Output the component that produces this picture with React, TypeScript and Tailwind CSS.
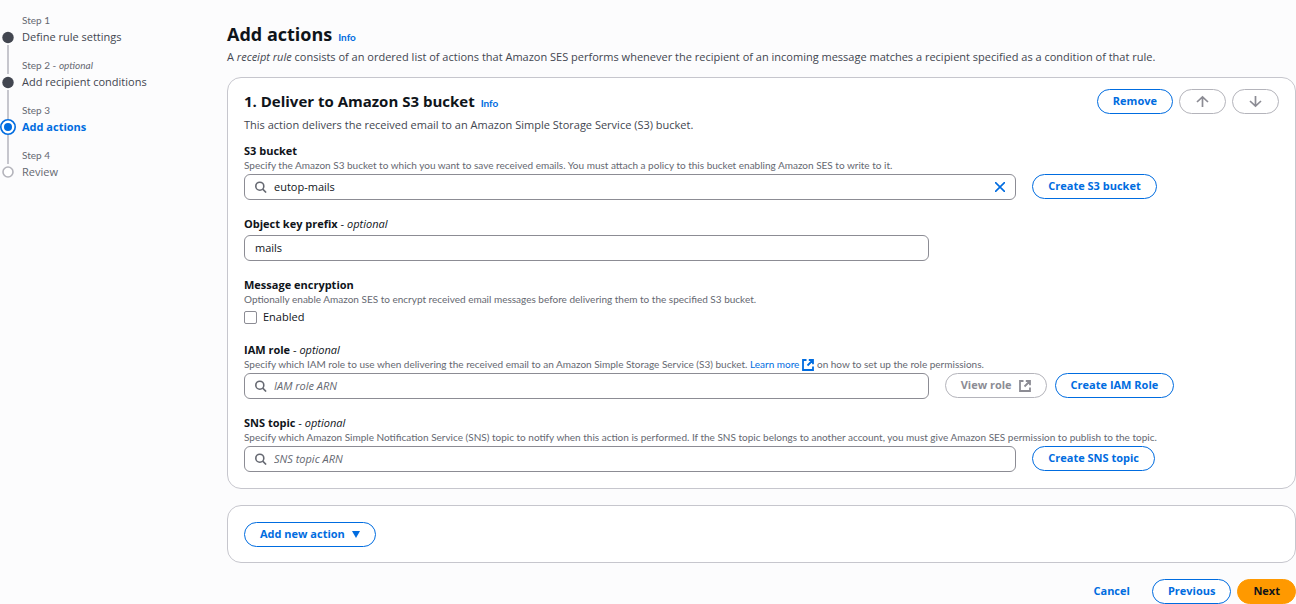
import { useState } from 'react';
import type { ReactNode } from 'react';

type StepState = 'done' | 'current' | 'todo';

const steps: { name: string; optional?: boolean; state: StepState }[] = [
  { name: 'Define rule settings', state: 'done' },
  { name: 'Add recipient conditions', optional: true, state: 'done' },
  { name: 'Add actions', state: 'current' },
  { name: 'Review', state: 'todo' },
];

const stepText: Record<StepState, string> = {
  done: 'text-[#424650]',
  current: 'font-bold text-[#006ce0]',
  todo: 'text-[#656871]',
};

const small = "font-['Lato','Open_Sans',sans-serif] text-[10px]";

function StepMarker({ state }: { state: StepState }) {
  return (
    <svg viewBox="0 0 16 16" className="size-4" aria-hidden="true">
      {state === 'done' && <circle cx="8" cy="8.5" r="5.7" fill="#424650" />}
      {state === 'current' && (
        <>
          <circle cx="8" cy="8" r="7.2" fill="#fff" stroke="#006ce0" strokeWidth="1.6" />
          <circle cx="8" cy="8" r="4" fill="#006ce0" />
        </>
      )}
      {state === 'todo' && <circle cx="8" cy="8" r="5" fill="#fff" stroke="#b4b4bb" strokeWidth="1.6" />}
    </svg>
  );
}

function Line({ hidden }: { hidden: boolean }) {
  return <span className={hidden ? 'w-0' : 'w-[2px] justify-self-center bg-[#c6c6cd]'} />;
}

function Steps() {
  return (
    <nav aria-label="Steps" className="w-[227px] shrink-0 pt-[13px]">
      <ol>
        {steps.map((step, i) => (
          <li key={step.name} className="grid grid-cols-[16px_1fr] grid-rows-[16px_16px_13px] gap-x-[6px]">
            <Line hidden={i === 0} />
            <span className={`${small} leading-[14px] text-[#656871]`}>
              Step {i + 1}
              {step.optional && (
                <>
                  {' '}- <i>optional</i>
                </>
              )}
            </span>
            <StepMarker state={step.state} />
            <a href="#step" className={`leading-4 ${stepText[step.state]}`}>
              {step.name}
            </a>
            <Line hidden={i === steps.length - 1} />
          </li>
        ))}
      </ol>
    </nav>
  );
}

const buttonStyles = {
  normal: 'border-[#006ce0] bg-white text-[#006ce0]',
  disabled: 'border-[#b4b4bb] bg-white text-[#8c8c94]',
  link: 'border-transparent text-[#006ce0]',
  primary: 'border-[#ff9900] bg-[#ff9900] text-[#0f141a]',
};

function Button({
  kind = 'normal',
  label,
  children,
}: {
  kind?: keyof typeof buttonStyles;
  label?: string;
  children: ReactNode;
}) {
  return (
    <button
      type="button"
      aria-label={label}
      disabled={kind === 'disabled'}
      className={`flex h-[25px] items-center gap-[7px] rounded-full border px-[15px] font-bold whitespace-nowrap ${buttonStyles[kind]}`}
    >
      {children}
    </button>
  );
}

function Arrow({ down = false }: { down?: boolean }) {
  return (
    <svg viewBox="0 0 15 13" className="h-[13px] w-[15px]" fill="none" stroke="currentColor" strokeWidth="1.7" aria-hidden="true">
      <path d={down ? 'M7.5 1v10M2 6l5.5 5.2L13 6' : 'M7.5 12V2M2 7l5.5-5.2L13 7'} />
    </svg>
  );
}

function External() {
  return (
    <svg viewBox="0 0 12 12" className="size-3" fill="none" stroke="currentColor" strokeWidth="1.8" aria-hidden="true">
      <path d="M4.5 1H1v10h10V7.5M6.8 1H11v4.2M11 1 5.5 6.5" />
    </svg>
  );
}

function Search() {
  return (
    <svg viewBox="0 0 12 12" className="size-3 shrink-0 text-[#656871]" fill="none" stroke="currentColor" strokeWidth="1.6" aria-hidden="true">
      <circle cx="4.8" cy="5.2" r="4" />
      <path d="m7.7 8.1 3.4 3.4" />
    </svg>
  );
}

function Info() {
  return (
    <a href="#info" className={`${small} font-bold text-[#006ce0]`}>
      Info
    </a>
  );
}

function Field({
  id,
  label,
  optional = false,
  description,
  children,
}: {
  id: string;
  label: string;
  optional?: boolean;
  description?: ReactNode;
  children: ReactNode;
}) {
  return (
    <div>
      <label htmlFor={id} className="block leading-4 text-[#0f141a]">
        <span className="font-bold">{label}</span>
        {optional && (
          <>
            {' '}- <i>optional</i>
          </>
        )}
      </label>
      {description && <p className={`${small} leading-[13px] text-[#656871]`}>{description}</p>}
      <div className={`grid grid-cols-12 gap-x-4 ${description ? 'mt-[2px]' : 'mt-[3px]'}`}>{children}</div>
    </div>
  );
}

const box = 'flex h-[26px] items-center rounded-[6px] border border-[#8c8c94] bg-white px-[10px]';
const input = 'min-w-0 flex-1 bg-transparent text-[#0f141a] outline-none placeholder:text-[#656871] placeholder:italic';

export default function App() {
  const [bucket, setBucket] = useState('eutop-mails');
  return (
    <div className="flex min-h-screen bg-[#fcfcfd] font-['Open_Sans','Noto_Sans',sans-serif] text-[11px] text-[#424650]">
      <Steps />
      <main className="min-w-0 flex-1 pt-[22px]">
        <h1 className="flex items-baseline gap-[6px] text-[18px] leading-6 font-bold text-[#0f141a]">
          Add actions <Info />
        </h1>
        <p className="leading-4">
          A <i>receipt rule</i> consists of an ordered list of actions that Amazon SES performs whenever the recipient of an
          incoming message matches a recipient specified as a condition of that rule.
        </p>

        <section className="mt-3 rounded-[14px] border border-[#c6c6cd] bg-white px-4 pt-[11px] pb-4">
          <div className="flex items-start justify-between">
            <h2 className="flex items-baseline gap-[6px] text-[15px] leading-6 font-bold text-[#0f141a]">
              1. Deliver to Amazon S3 bucket <Info />
            </h2>
            <div className="flex gap-[6px]">
              <Button>Remove</Button>
              <Button kind="disabled" label="Move up">
                <Arrow />
              </Button>
              <Button kind="disabled" label="Move down">
                <Arrow down />
              </Button>
            </div>
          </div>
          <p className="mt-[2px] leading-4">
            This action delivers the received email to an Amazon Simple Storage Service (S3) bucket.
          </p>

          <div className="mt-[10px] flex flex-col gap-4">
            <Field
              id="bucket"
              label="S3 bucket"
              description="Specify the Amazon S3 bucket to which you want to save received emails. You must attach a policy to this bucket enabling Amazon SES to write to it."
            >
              <div className={`${box} col-span-9 gap-[7px]`}>
                <Search />
                <input id="bucket" className={input} value={bucket} onChange={(e) => setBucket(e.target.value)} />
                <button type="button" aria-label="Clear" onClick={() => setBucket('')} className="text-[#006ce0]">
                  <svg viewBox="0 0 10 10" className="size-[10px]" fill="none" stroke="currentColor" strokeWidth="1.6" aria-hidden="true">
                    <path d="m0 0 10 10M10 0 0 10" />
                  </svg>
                </button>
              </div>
              <div className="col-span-3 flex">
                <Button>Create S3 bucket</Button>
              </div>
            </Field>

            <Field id="prefix" label="Object key prefix" optional>
              <div className={`${box} col-span-8`}>
                <input id="prefix" className={input} defaultValue="mails" />
              </div>
            </Field>

            <Field
              id="encryption"
              label="Message encryption"
              description="Optionally enable Amazon SES to encrypt received email messages before delivering them to the specified S3 bucket."
            >
              <label className="col-span-12 flex h-[18px] items-center gap-[6px] text-[#0f141a]">
                <input
                  id="encryption"
                  type="checkbox"
                  className="size-[13px] appearance-none rounded-[2px] border border-[#8c8c94] bg-white checked:bg-[#006ce0]"
                />
                Enabled
              </label>
            </Field>

            <Field
              id="role"
              label="IAM role"
              optional
              description={
                <>
                  Specify which IAM role to use when delivering the received email to an Amazon Simple Storage Service (S3)
                  bucket.{' '}
                  <a href="#learn" className="inline-flex items-center gap-[3px] align-top text-[#006ce0]">
                    Learn more <External />
                  </a>{' '}
                  on how to set up the role permissions.
                </>
              }
            >
              <div className={`${box} col-span-8 gap-[7px]`}>
                <Search />
                <input id="role" className={input} placeholder="IAM role ARN" />
              </div>
              <div className="col-span-4 flex gap-2">
                <Button kind="disabled">
                  View role <External />
                </Button>
                <Button>Create IAM Role</Button>
              </div>
            </Field>

            <Field
              id="topic"
              label="SNS topic"
              optional
              description="Specify which Amazon Simple Notification Service (SNS) topic to notify when this action is performed. If the SNS topic belongs to another account, you must give Amazon SES permission to publish to the topic."
            >
              <div className={`${box} col-span-9 gap-[7px]`}>
                <Search />
                <input id="topic" className={input} placeholder="SNS topic ARN" />
              </div>
              <div className="col-span-3 flex">
                <Button>Create SNS topic</Button>
              </div>
            </Field>
          </div>
        </section>

        <section className="mt-4 flex rounded-[14px] border border-[#c6c6cd] bg-white px-4 pt-4 pb-[15px]">
          <Button>
            Add new action
            <svg viewBox="0 0 8 7" className="h-[7px] w-2" fill="currentColor" aria-hidden="true">
              <path d="M0 0h8L4 7z" />
            </svg>
          </Button>
        </section>

        <div className="mt-4 flex justify-end gap-[6px]">
          <Button kind="link">Cancel</Button>
          <Button>Previous</Button>
          <Button kind="primary">Next</Button>
        </div>
      </main>
    </div>
  );
}
